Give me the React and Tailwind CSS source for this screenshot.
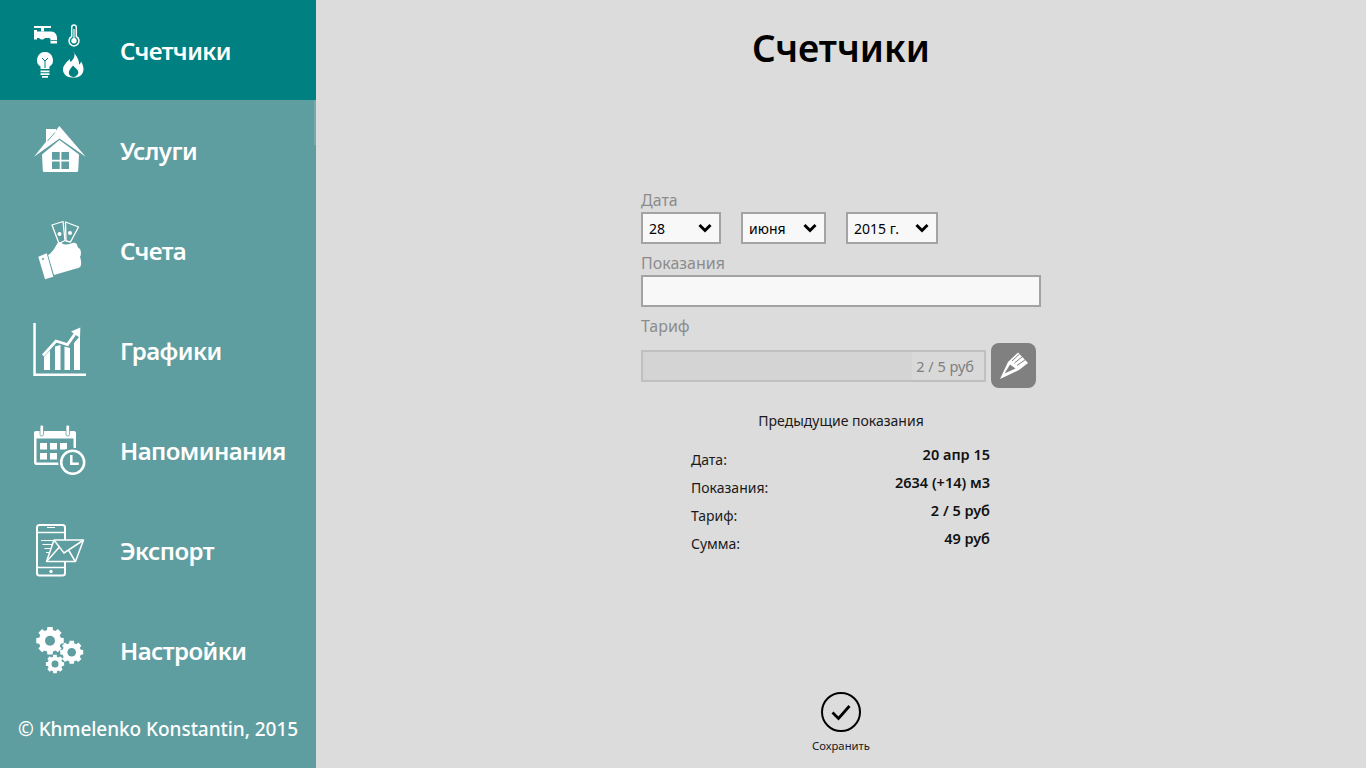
import React from "react";

function gearPath(cx, cy, r, teeth) {
  const pts = [];
  const step = (Math.PI * 2) / teeth;
  const outer = r;
  const inner = r * 0.8;
  for (let i = 0; i < teeth; i++) {
    const a = i * step - Math.PI / 2;
    const w = step * 0.24;
    const w2 = step * 0.34;
    [
      [a - w2, inner],
      [a - w, outer],
      [a + w, outer],
      [a + w2, inner],
    ].forEach(([t, rr]) => pts.push(`${(cx + rr * Math.cos(t)).toFixed(2)} ${(cy + rr * Math.sin(t)).toFixed(2)}`));
  }
  return "M" + pts.join("L") + "Z";
}

const Svg = ({ children }) => (
  <svg viewBox="0 0 60 60" className="w-[60px] h-[60px] shrink-0">
    {children}
  </svg>
);

const MetersIcon = () => (
  <Svg>
    <path d="M4 6h17v2h-7v3.500h-3V8H4z" fill="#fff" />
    <path d="M4 10h3v1.500h14c4 0 6 3 6 7v5h-6.500v-4c0-1-1-1.500-2-1.500H15c-2 2-4 2-6 0H7v1.500H4z" fill="#fff" />
    <path d="M20.500 20.500h6.500" stroke="#008080" strokeWidth=".8" />
    <path d="M41.700 16.500V7.200a2.300 2.300 0 0 1 4.600 0v9.300a5 5 0 1 1-4.600 0z" fill="none" stroke="#fff" strokeWidth="1.500" />
    <circle cx="44" cy="20.800" r="2.700" fill="#fff" />
    <path d="M44 19V9" stroke="#fff" strokeWidth="1.200" />
    <path d="M15 32a8 8 0 0 1 4.500 14.600V49h-9v-2.400A8 8 0 0 1 15 32z" fill="#fff" />
    <path d="M15 48v-7l-3-3M15 41l3-3" fill="none" stroke="#008080" strokeWidth="1" />
    <path d="M10.500 50.500h9v1.800h-9zM10.500 53.300h9v1.700h-9zM12 56h6v1.700h-6z" fill="#fff" />
    <path d="M44 32c1.500 4.500-.5 7-2.500 9.200-1 1.200-1.800 0-1.500-2.200-3.500 3-7 6.500-7 10.500 0 4.500 4 8 9 8h4c4.500-.5 7.500-4 7.500-8.500 0-2.700-1.200-5.700-2.500-7.500-.3 1.700-1 2.800-2 3 .5-4.500-2.500-8.500-5.500-12.500z" fill="#fff" />
    <path d="M43 45.500c-2.700 3.200-4.800 5.800-4 8.500.5 1.500 2 2.500 4 3h1c2-.5 3.800-2 4.300-4 .5-3-2.800-4.800-5.300-7.500z" fill="#008080" />
  </Svg>
);

const HouseIcon = () => (
  <Svg>
    <path d="M4 36.700 16 21.700V9H26V10.500L29.300 6 55.700 36.700 29.500 18.500z" fill="#fff" />
    <path d="M17.500 21 25 12.500" stroke="#5f9ea0" strokeWidth=".9" />
    <path d="M29.500 20 49 34.500l-.8 16c0 1-.7 1.500-1.700 1.500H14.500c-1 0-1.700-.5-1.700-1.500L12 34.500z" fill="#fff" />
    <path d="M22 32h17v17H22z" fill="#5f9ea0" />
    <path d="M29.700 32h1.700v17h-1.700zM22 39.700h17v1.700H22z" fill="#fff" />
  </Svg>
);

const BillsIcon = () => (
  <Svg>
    <path d="M8.300 36.700 16.700 33.300 23.300 56.700 15 59.300z" fill="#fff" />
    <circle cx="13" cy="39" r="1" fill="#5f9ea0" />
    <path d="M18 35c4-2 6.500-6.500 9.500-12 1.500-1.500 3.500-1 4.500.5 2.500 1.500 6 1 9 0 2-1.500 5-1 6 1 .5 1.500.5 3.500 3 4.500 1.500 2.500 1 7 0 8 1 2.500 1.700 7 .5 9.500-1.500 1.500-3.500 2-6 2.500L24 55z" fill="#fff" />
    <path d="M22 5 33 1.500 35 20.500 29 23.500z" fill="none" stroke="#fff" strokeWidth="1.300" strokeLinejoin="round" />
    <path d="M35.500 2 48.500 7 40.500 22 36 21z" fill="none" stroke="#fff" strokeWidth="1.300" strokeLinejoin="round" />
    <circle cx="29.500" cy="14" r="2" fill="#fff" />
    <circle cx="40" cy="13" r="2" fill="#fff" />
  </Svg>
);

const ChartIcon = () => (
  <Svg>
    <path d="M3.300 3H5.800V53.600H56V56H3.300z" fill="#fff" />
    <path d="M14 37 20 30.500V50H14zM25 26.500 30.500 25V50H25zM34.500 26.500 40 28V50H34.500zM44 23 50 16V50H44z" fill="#fff" />
    <path d="M13 35.500 26 21 37.500 24.500 47 11" fill="none" stroke="#fff" strokeWidth="2.800" />
    <path d="M41 11.500 50.300 7.500 50 18z" fill="#fff" />
  </Svg>
);

const ReminderIcon = () => (
  <Svg>
    <path d="M6 11h38c1.200 0 2 .8 2 2v29c0 1.500-.8 3-2 3H6c-1.200 0-2-1.500-2-3V13c0-1.200.8-2 2-2z" fill="#fff" />
    <path d="M6.500 18.500h37V42.500H6.500z" fill="#5f9ea0" />
    <rect x="10" y="5" width="3.500" height="11" rx="1.700" fill="#fff" stroke="#5f9ea0" strokeWidth=".8" />
    <rect x="36" y="5" width="3.500" height="11" rx="1.700" fill="#fff" stroke="#5f9ea0" strokeWidth=".8" />
    <path d="M10 23h7v6.500h-7zM20 23h7v6.500h-7zM30 23h7v6.500h-7zM10 33h7v6.500h-7zM20 33h7v6.500h-7z" fill="#fff" />
    <circle cx="42.700" cy="42.300" r="14.500" fill="#5f9ea0" />
    <circle cx="42.700" cy="42.300" r="11.500" fill="none" stroke="#fff" strokeWidth="2.500" />
    <path d="M41.300 35v8.800h7.500" fill="none" stroke="#fff" strokeWidth="2.500" />
  </Svg>
);

const ExportIcon = () => (
  <Svg>
    <rect x="7" y="5" width="28" height="50.500" rx="2.500" fill="none" stroke="#fff" strokeWidth="2" />
    <path d="M7 12.500h28M7 47.500h28" stroke="#fff" strokeWidth="1.500" />
    <path d="M17 7.500h8" stroke="#fff" strokeWidth="1" />
    <circle cx="21" cy="51.500" r="1.700" fill="#fff" />
    <path d="M24 20H53.500L45.500 41.500H16.500z" fill="#5f9ea0" stroke="#fff" strokeWidth="1.500" strokeLinejoin="round" />
    <path d="M24.300 20.500 34 33l19-12.500M17 41 29 27.500M45 41 38.500 30" fill="none" stroke="#fff" strokeWidth="1.500" />
    <path d="M11 20.500h13M12.500 24.500h10M14.500 28.500h6M16 32.500h3" stroke="#fff" strokeWidth="1.200" />
  </Svg>
);

const SettingsIcon = () => (
  <Svg>
    <path d={gearPath(20, 20.700, 14, 8)} fill="#fff" />
    <circle cx="20" cy="20.700" r="5" fill="#5f9ea0" />
    <path d={gearPath(41.700, 32.300, 11.700, 8)} fill="#fff" />
    <circle cx="41.700" cy="32.300" r="4.300" fill="#5f9ea0" />
    <path d={gearPath(25, 44, 9.300, 8)} fill="#fff" />
    <circle cx="25" cy="44" r="3.500" fill="#5f9ea0" />
  </Svg>
);

const items = [
  { label: "Счетчики", Icon: MetersIcon, active: true },
  { label: "Услуги", Icon: HouseIcon },
  { label: "Счета", Icon: BillsIcon },
  { label: "Графики", Icon: ChartIcon },
  { label: "Напоминания", Icon: ReminderIcon },
  { label: "Экспорт", Icon: ExportIcon },
  { label: "Настройки", Icon: SettingsIcon },
];

const Chevron = () => (
  <svg viewBox="0 0 14 10" className="w-[14px] h-[10px] shrink-0">
    <path d="M1.500 2 7 7.500 12.500 2" fill="none" stroke="#000" strokeWidth="3" />
  </svg>
);

const Select = ({ value, className }) => (
  <div className={`h-8 border-2 border-[#a3a3a3] bg-[#f8f8f8] flex items-center justify-between pl-[6px] pr-[7px] text-sm text-black ${className}`}>
    <span className="pt-[2px]">{value}</span>
    <Chevron />
  </div>
);

const Label = ({ children, className = "" }) => (
  <div className={`text-base leading-[22px] text-[#8c8c8c] ${className}`}>{children}</div>
);

export default function App() {
  return (
    <div className="relative flex w-[1366px] h-[768px] overflow-hidden bg-[#dcdcdc] font-['Noto_Sans','Open_Sans',sans-serif]">
      <aside className="relative w-[316px] shrink-0 flex flex-col bg-[#5f9ea0] text-white">
        {items.map(({ label, Icon, active }) => (
          <div key={label} className={`h-[100px] flex items-center pl-[30px] gap-[30px] ${active ? "bg-[#008080]" : ""}`}>
            <Icon />
            <span className="pt-[2px] text-[24px] font-semibold tracking-[-0.55px]">{label}</span>
          </div>
        ))}
        <div className="mt-[15px] text-center text-[19px] font-medium leading-[28px] tracking-[-0.05px]">© Khmelenko Konstantin, 2015</div>
        <div className="absolute right-0 top-[100px] w-[2px] h-[45px] bg-[#74abad]" />
      </aside>

      <main className="flex-1 flex flex-col items-center">
        <h1 className="mt-[20px] text-[37px] leading-[56px] font-semibold text-black">Счетчики</h1>

        <div className="mt-[113px] w-[400px] flex flex-col">
          <Label>Дата</Label>
          <div className="mt-px flex gap-5">
            <Select value="28" className="w-20" />
            <Select value="июня" className="w-[85px]" />
            <Select value="2015 г." className="w-[92px]" />
          </div>
          <Label className="mt-2">Показания</Label>
          <div className="mt-px h-8 border-2 border-[#a3a3a3] bg-[#f8f8f8]" />
          <Label className="mt-2">Тариф</Label>
          <div className="mt-[6px] flex items-center gap-[5px]">
            <div className="w-[345px] h-8 border-2 border-[#c0c0c0] bg-[#d4d4d4] flex justify-end">
              <span className="h-full bg-[#d9d9d9] pl-[4px] pr-[10px] text-[14.5px] leading-[28px] text-[#7f7f7f]">2 / 5 руб</span>
            </div>
            <button className="w-[45px] h-[45px] rounded-lg bg-[#808080] flex items-center justify-center">
              <svg viewBox="0 0 45 45" className="w-[45px] h-[45px]">
                <path d="M9 36 17 19 27 9.500 37 20 28 27z" fill="#fff" />
                <path d="M13.500 30.500 19 21.500 24.500 25.500z" fill="#808080" />
                <path d="M21 18 28.500 11M23.500 20 31.500 13.500M26 22.500 34.500 16.500" stroke="#808080" strokeWidth="1" />
              </svg>
            </button>
          </div>
        </div>

        <div className="mt-[23px] text-sm leading-5 text-[#1a1a1a]">Предыдущие показания</div>
        <div className="mt-[13px] w-[300px] pr-px flex justify-between text-sm">
          <div className="mt-[2px] leading-[28px] text-[#1a1a1a]">
            <div>Дата:</div>
            <div>Показания:</div>
            <div>Тариф:</div>
            <div>Сумма:</div>
          </div>
          <div className="-mt-[4px] leading-[28px] text-[14.5px] font-semibold text-right text-[#111]">
            <div>20 апр 15</div>
            <div>2634 (+14) м3</div>
            <div>2 / 5 руб</div>
            <div>49 руб</div>
          </div>
        </div>

        <div className="mt-auto mb-[14px] flex flex-col items-center">
          <svg viewBox="0 0 40 40" className="w-10 h-10">
            <circle cx="20" cy="20" r="19" fill="none" stroke="#000" strokeWidth="2" />
            <path d="M11.500 20.500 17.500 26.500 28.500 14" fill="none" stroke="#000" strokeWidth="2.800" />
          </svg>
          <span className="mt-[6px] text-[11.3px] leading-[16px] text-[#1a1a1a]">Сохранить</span>
        </div>
      </main>
    </div>
  );
}
